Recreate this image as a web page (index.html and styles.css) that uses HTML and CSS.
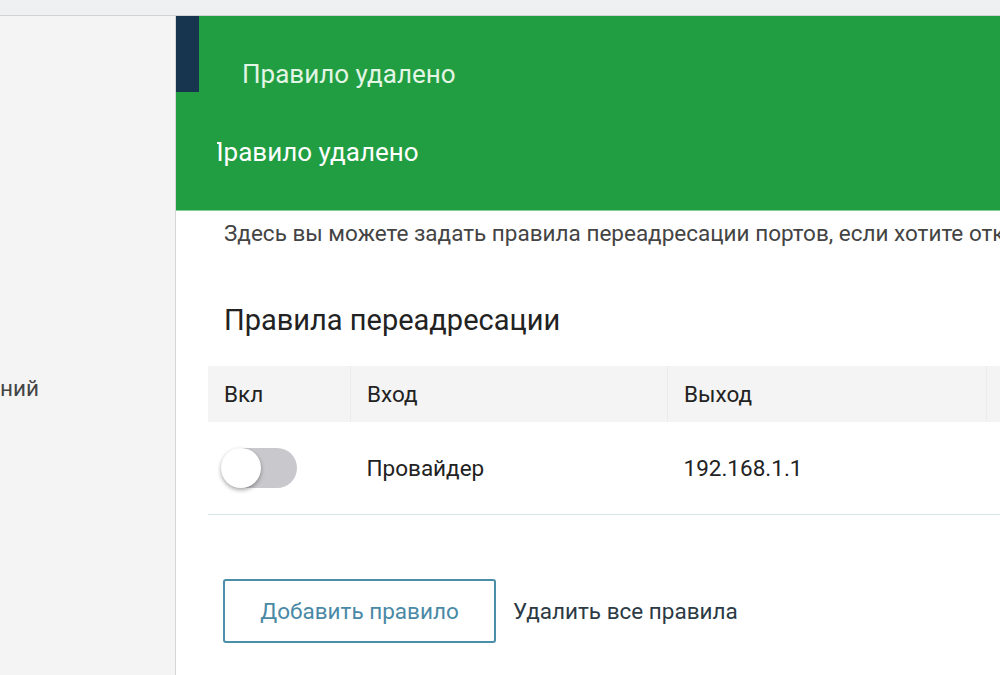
FILE: index.html
```html
<!DOCTYPE html>
<html>
<head>
    <title>Переадресация портов</title>
    <link rel="stylesheet" href="styles.css">
</head>
<body>
    <div class="topbar"></div>
    <div class="layout">
        <div class="sidebar">
            <div class="nav-item">ний</div>
        </div>
        <div class="main">
            <div class="notice">
                <div class="notice-row">
                    <div class="notice-stripe"></div>
                    <div class="notice-text">Правило удалено</div>
                </div>
                <div class="notice-clip">
                    <div class="notice-text">Правило удалено</div>
                </div>
            </div>

            <p class="intro">Здесь вы можете задать правила переадресации портов, если хотите открыть доступ к устройствам домашней сети</p>

            <h2>Правила переадресации</h2>

            <table class="rules">
                <thead>
                    <tr>
                        <th class="col-on">Вкл</th>
                        <th class="col-in">Вход</th>
                        <th class="col-out">Выход</th>
                        <th class="col-rest"></th>
                    </tr>
                </thead>
                <tbody>
                    <tr>
                        <td><span class="toggle"><span class="knob"></span></span></td>
                        <td>Провайдер</td>
                        <td>192.168.1.1</td>
                        <td></td>
                    </tr>
                </tbody>
            </table>

            <div class="actions">
                <button class="btn-add">Добавить правило</button>
                <a class="link-delete" href="#">Удалить все правила</a>
            </div>
        </div>
    </div>
</body>
</html>
```

FILE: styles.css
```css
body {
    margin: 0;
    font-family: Roboto, "Noto Sans", sans-serif;
    background-color: #fff;
    overflow: hidden;
}
.topbar {
    height: 15px;
    background-color: #eef0f1;
    border-bottom: 1px solid #cfd3d4;
}
.layout {
    display: flex;
    height: 659px;
}
.sidebar {
    width: 176px;
    flex-shrink: 0;
    background-color: #f4f4f4;
    border-right: 1px solid #d6d6d6;
    box-sizing: border-box;
}
.nav-item {
    margin-top: 357px;
    font-size: 22.5px;
    color: #444;
    line-height: 30px;
}
.main {
    flex: 1;
    min-width: 0;
    overflow: hidden;
}
.notice {
    background-color: #219e42;
    height: 194px;
    border-bottom: 1px solid #7fd196;
    color: #e3f5e4;
    font-size: 26px;
}
.notice-row {
    display: flex;
    height: 76px;
}
.notice-stripe {
    width: 23px;
    height: 76px;
    background-color: #183550;
}
.notice-text {
    margin-left: 43px;
    padding-top: 42px;
    line-height: 32px;
    white-space: nowrap;
}
.notice-clip {
    margin-left: 41px;
    overflow: hidden;
}
.notice-clip .notice-text {
    margin-left: -12px;
    padding-top: 44px;
    color: #fff;
}
.intro {
    margin: 8px 0 0 48px;
    font-size: 22.5px;
    line-height: 28px;
    color: #444;
    white-space: nowrap;
}
h2 {
    margin: 54px 0 0 48px;
    font-size: 29px;
    font-weight: normal;
    line-height: 38px;
    color: #222;
}
.rules {
    margin: 27px 0 0 32px;
    border-collapse: collapse;
    width: 820px;
    font-size: 22.5px;
    color: #222;
}
.rules th {
    background-color: #f4f4f4;
    height: 56px;
    font-weight: normal;
    text-align: left;
    padding: 0 16px;
    border-right: 1px solid #ececec;
}
.rules th.col-rest {
    border-right: none;
}
.col-on {
    width: 110px;
}
.col-in {
    width: 284px;
}
.col-out {
    width: 286px;
}
.rules td {
    height: 92px;
    padding: 0 16px;
    border-bottom: 1px solid #d6e3e7;
}
.toggle {
    display: block;
    width: 73px;
    height: 40px;
    border-radius: 20px;
    background-color: #c9c9cd;
    position: relative;
}
.knob {
    position: absolute;
    left: -3px;
    top: 0;
    width: 40px;
    height: 40px;
    border-radius: 50%;
    background-color: #fff;
    box-shadow: 0 2px 4px rgba(0, 0, 0, 0.35);
}
.actions {
    display: flex;
    align-items: center;
    margin: 64px 0 0 47px;
}
.btn-add {
    width: 273px;
    height: 64px;
    border: 2px solid #4a8ea8;
    border-radius: 3px;
    background-color: #fff;
    color: #4a89a6;
    font-family: Roboto, "Noto Sans", sans-serif;
    font-size: 22.5px;
}
.link-delete {
    margin-left: 17px;
    font-size: 22.5px;
    color: #2b3a44;
    text-decoration: none;
}
```
